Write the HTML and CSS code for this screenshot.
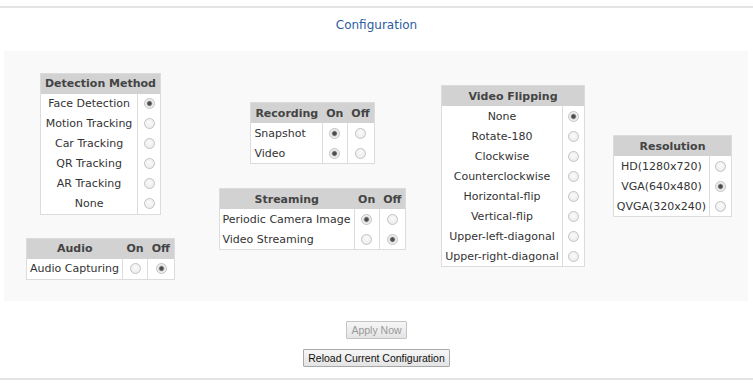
FILE: index.html
```html
<!DOCTYPE html>
<html lang="en">
<head>
  <meta charset="UTF-8">
  <meta name="viewport" content="width=device-width, initial-scale=1.0">
  <title>Configuration</title>
  <link rel="stylesheet" href="styles.css">
</head>
<body>

<div class="top-rule"></div>
<h1 class="page-title">Configuration</h1>

<!-- Settings panel -->
<div class="config-panel">

  <div class="config-col col-1">
    <table class="opt-table centered">
      <tr><th colspan="2">Detection Method</th></tr>
      <tr><td class="label">Face Detection</td><td class="radio"><input type="radio" name="detect" checked></td></tr>
      <tr><td class="label">Motion Tracking</td><td class="radio"><input type="radio" name="detect"></td></tr>
      <tr><td class="label">Car Tracking</td><td class="radio"><input type="radio" name="detect"></td></tr>
      <tr><td class="label">QR Tracking</td><td class="radio"><input type="radio" name="detect"></td></tr>
      <tr><td class="label">AR Tracking</td><td class="radio"><input type="radio" name="detect"></td></tr>
      <tr><td class="label">None</td><td class="radio"><input type="radio" name="detect"></td></tr>
    </table>

    <table class="opt-table onoff">
      <tr><th>Audio</th><th>On</th><th>Off</th></tr>
      <tr><td class="label">Audio Capturing</td><td class="radio"><input type="radio" name="audio"></td><td class="radio"><input type="radio" name="audio" checked></td></tr>
    </table>
  </div>

  <div class="config-col col-2">
    <table class="opt-table onoff">
      <tr><th>Recording</th><th>On</th><th>Off</th></tr>
      <tr><td class="label">Snapshot</td><td class="radio"><input type="radio" name="snap" checked></td><td class="radio"><input type="radio" name="snap"></td></tr>
      <tr><td class="label">Video</td><td class="radio"><input type="radio" name="video" checked></td><td class="radio"><input type="radio" name="video"></td></tr>
    </table>

    <table class="opt-table onoff">
      <tr><th>Streaming</th><th>On</th><th>Off</th></tr>
      <tr><td class="label">Periodic Camera Image</td><td class="radio"><input type="radio" name="periodic" checked></td><td class="radio"><input type="radio" name="periodic"></td></tr>
      <tr><td class="label">Video Streaming</td><td class="radio"><input type="radio" name="vstream"></td><td class="radio"><input type="radio" name="vstream" checked></td></tr>
    </table>
  </div>

  <div class="config-col col-3">
    <table class="opt-table centered">
      <tr><th colspan="2">Video Flipping</th></tr>
      <tr><td class="label">None</td><td class="radio"><input type="radio" name="flip" checked></td></tr>
      <tr><td class="label">Rotate-180</td><td class="radio"><input type="radio" name="flip"></td></tr>
      <tr><td class="label">Clockwise</td><td class="radio"><input type="radio" name="flip"></td></tr>
      <tr><td class="label">Counterclockwise</td><td class="radio"><input type="radio" name="flip"></td></tr>
      <tr><td class="label">Horizontal-flip</td><td class="radio"><input type="radio" name="flip"></td></tr>
      <tr><td class="label">Vertical-flip</td><td class="radio"><input type="radio" name="flip"></td></tr>
      <tr><td class="label">Upper-left-diagonal</td><td class="radio"><input type="radio" name="flip"></td></tr>
      <tr><td class="label">Upper-right-diagonal</td><td class="radio"><input type="radio" name="flip"></td></tr>
    </table>
  </div>

  <div class="config-col col-4">
    <table class="opt-table centered">
      <tr><th colspan="2">Resolution</th></tr>
      <tr><td class="label">HD(1280x720)</td><td class="radio"><input type="radio" name="res"></td></tr>
      <tr><td class="label">VGA(640x480)</td><td class="radio"><input type="radio" name="res" checked></td></tr>
      <tr><td class="label">QVGA(320x240)</td><td class="radio"><input type="radio" name="res"></td></tr>
    </table>
  </div>

</div>

<!-- Actions -->
<div class="actions">
  <button class="btn" disabled>Apply Now</button>
  <button class="btn">Reload Current Configuration</button>
</div>

<div class="bottom-rule"></div>

</body>
</html>
```

FILE: styles.css
```css
/* Page */
body {
  margin: 0;
  background: #fff;
  font-family: "DejaVu Sans", Verdana, sans-serif;
  font-size: 11px;
  color: #333;
}

.top-rule {
  margin-top: 6px;
  border-top: 2px solid #e4e4e4;
}

.page-title {
  margin: 0;
  height: 43px;
  line-height: 34px;
  text-align: center;
  font-size: 12px;
  font-weight: normal;
  color: #2c5d9e;
}

/* Gray panel holding the option tables */
.config-panel {
  display: flex;
  align-items: center;
  margin: 0 5px 0 4px;
  height: 250px;
  padding-left: 22px;
  background: #f9f9f9;
}

.config-col {
  display: flex;
  flex-direction: column;
  align-items: center;
}

.col-1 { width: 149px; gap: 23px; margin-right: 45px; }
.col-2 { width: 185px; gap: 24px; margin-right: 33px; }
.col-3 { width: 150px; margin-right: 22px; }
.col-4 { width: 125px; }

/* Option tables */
.opt-table {
  border-collapse: collapse;
  background: #fff;
  border: 1px solid #dcdcdc;
}

.opt-table th {
  height: 20px;
  padding: 0 4px;
  background: #d2d2d2;
  font-weight: bold;
  color: #444;
  white-space: nowrap;
}

.opt-table td {
  height: 20px;
  padding: 0 3px;
  white-space: nowrap;
}

.opt-table td.radio {
  border-left: 1px solid #dcdcdc;
  padding: 0 5px;
  text-align: center;
}

.centered td.label {
  text-align: center;
}

.onoff th:first-child {
  text-align: center;
}

.onoff td.label {
  text-align: left;
}

/* Radio buttons */
input[type="radio"] {
  appearance: none;
  -webkit-appearance: none;
  display: block;
  margin: 0 auto;
  width: 11px;
  height: 11px;
  border: 1px solid #c4c4c4;
  border-radius: 50%;
  background: radial-gradient(circle at 50% 40%, #fafafa 0%, #e8e8e8 100%);
  box-sizing: border-box;
}

input[type="radio"]:checked {
  background: radial-gradient(circle, #444 0, #555 1.8px, #bbb 2.6px, #f2f2f2 3.4px, #e6e6e6 100%);
}

/* Buttons */
.actions {
  display: flex;
  flex-direction: column;
  align-items: center;
  gap: 10px;
  padding-top: 20px;
  height: 57px;
}

.btn {
  height: 18px;
  padding: 0 4px;
  font-family: "Liberation Sans", Arial, sans-serif;
  font-size: 10.5px;
  color: #111;
  background: linear-gradient(#f6f6f6, #e4e4e4);
  border: 1px solid #a9a9a9;
  border-radius: 1px;
}

.btn:disabled {
  color: #999;
  border-color: #c4c4c4;
}

.bottom-rule {
  border-top: 2px solid #e4e4e4;
}
```
